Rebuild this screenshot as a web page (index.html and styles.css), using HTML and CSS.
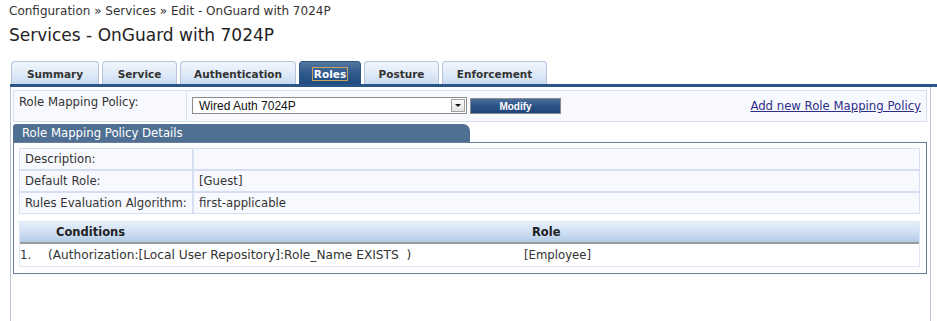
FILE: index.html
```html
<!DOCTYPE html>
<html lang="en">
<head>
    <meta charset="UTF-8">
    <title>Services - OnGuard with 7024P</title>
    <link rel="stylesheet" href="styles.css">
</head>
<body>
    <div class="breadcrumb">Configuration &raquo; Services &raquo; Edit - OnGuard with 7024P</div>
    <h1>Services - OnGuard with 7024P</h1>

    <div class="tabs">
        <a class="tab tab-summary">Summary</a>
        <a class="tab tab-service">Service</a>
        <a class="tab tab-auth">Authentication</a>
        <a class="tab tab-roles active"><span class="focus">Roles</span></a>
        <a class="tab tab-posture">Posture</a>
        <a class="tab tab-enforce">Enforcement</a>
    </div>

    <main class="panel">
        <div class="policy-row">
            <div class="label">Role Mapping Policy:</div>
            <div class="value">
                <div class="select">
                    <span>Wired Auth 7024P</span>
                    <span class="arrow"></span>
                </div>
                <button class="btn">Modify</button>
                <a class="add-link" href="#">Add new Role Mapping Policy</a>
            </div>
        </div>

        <div class="details-head">Role Mapping Policy Details</div>
        <div class="details">
            <table class="info">
                <tr><td class="label">Description:</td><td></td></tr>
                <tr><td class="label">Default Role:</td><td>[Guest]</td></tr>
                <tr><td class="label">Rules Evaluation Algorithm:</td><td>first-applicable</td></tr>
            </table>

            <table class="rules">
                <thead>
                    <tr>
                        <th class="num"></th>
                        <th class="cond">Conditions</th>
                        <th class="role">Role</th>
                    </tr>
                </thead>
                <tbody>
                    <tr>
                        <td class="num">1.</td>
                        <td class="cond">(Authorization:[Local User Repository]:Role_Name EXISTS &nbsp;)</td>
                        <td class="role">[Employee]</td>
                    </tr>
                </tbody>
            </table>
        </div>
    </main>
</body>
</html>
```

FILE: styles.css
```css
/* Policy Manager service page */
body {
    margin: 0;
    font-family: "DejaVu Sans", Verdana, sans-serif;
    font-size: 11.7px;
    color: #333;
    background: #fff;
}

.breadcrumb {
    padding: 4px 0 0 9px;
    font-size: 12px;
    line-height: 14px;
}

h1 {
    margin: 6px 0 0 9px;
    font-size: 17px;
    font-weight: normal;
    line-height: 22px;
    color: #222;
}

/* Tabs */
.tabs {
    display: flex;
    align-items: flex-end;
    gap: 3px;
    margin: 15px 0 0 10px;
    padding-left: 1px;
    border-bottom: 3px solid #2a5587;
}

.tab {
    box-sizing: border-box;
    height: 23px;
    line-height: 24px;
    text-align: center;
    border: 1px solid #b5c4dc;
    border-bottom: none;
    border-radius: 4px 4px 0 0;
    background: linear-gradient(#f1f6fd, #dde9f7 60%, #c8dbf0);
    font-size: 10.5px;
    font-weight: bold;
    color: #333;
    cursor: pointer;
}

.tab-summary { width: 88px; }
.tab-service { width: 75px; }
.tab-auth { width: 116px; }
.tab-roles { width: 62px; }
.tab-posture { width: 75px; }
.tab-enforce { width: 105px; }

.tab.active {
    background: linear-gradient(#55789f, #2f5a8c 50%, #1f4b80);
    border-color: #2a5587;
    color: #fff;
}

.tab .focus {
    border: 1px solid #c9a25e;
    padding: 0 1px;
}

/* Main panel */
.panel {
    margin: 0 6px 0 10px;
    min-height: 235px;
    padding: 3px 3px 0 2px;
    border-left: 1px solid #b7c3dd;
    border-right: 1px solid #b7c3dd;
}

/* Policy selector row */
.policy-row {
    display: flex;
    height: 32px;
}

.policy-row .label,
.policy-row .value {
    border: 1px solid #d5def2;
    background: #f8f9fe;
}

.policy-row .label {
    width: 167px;
    padding: 4px 0 0 5px;
    border-right: none;
}

.policy-row .value {
    flex: 1;
    display: flex;
    align-items: flex-start;
    padding: 6px 5px 0 5px;
}

.select {
    display: flex;
    align-items: center;
    justify-content: space-between;
    width: 267px;
    height: 15px;
    border: 1px solid #8c8c8c;
    background: #fff;
    font-family: "Liberation Sans", Arial, sans-serif;
    font-size: 12px;
    color: #111;
    padding-left: 6px;
    box-sizing: content-box;
}

.select .arrow {
    width: 14px;
    height: 13px;
    margin-right: 1px;
    border: 1px solid #a0a0a0;
    background: linear-gradient(#fbfbfb, #e2e2e2);
    box-sizing: border-box;
    position: relative;
}

.select .arrow::after {
    content: "";
    position: absolute;
    left: 3px;
    top: 4px;
    border-left: 3px solid transparent;
    border-right: 3px solid transparent;
    border-top: 3px solid #111;
}

.btn {
    margin: 1px 0 0 3px;
    width: 91px;
    height: 16px;
    padding: 0;
    border: 1px solid #8a8a8a;
    background: linear-gradient(#4a6f9c, #2a5286 50%, #1e467c);
    color: #fff;
    font-family: "Liberation Sans", Arial, sans-serif;
    font-size: 10px;
    font-weight: bold;
    cursor: pointer;
}

.add-link {
    margin-left: auto;
    color: #2e2e8a;
    padding-top: 2px;
}

/* Details panel */
.details-head {
    width: 448px;
    height: 18px;
    line-height: 18px;
    margin-top: 2px;
    padding-left: 9px;
    background: #4f6f93;
    color: #fff;
    border-radius: 3px 7px 0 0;
}

.details {
    border: 1px solid #667d9c;
    padding: 5px 6px 6px 5px;
}

table {
    border-collapse: separate;
    border-spacing: 0;
    width: 100%;
}

.info td {
    height: 20px;
    border: 1px solid #d5def2;
    background: #f8f9fe;
    padding: 0 5px;
}

.info .label {
    width: 162px;
}

.rules {
    margin-top: 7px;
    border: 1px solid #dde6f5;
    table-layout: fixed;
}

.rules th {
    height: 20px;
    text-align: left;
    font-weight: bold;
    font-size: 11.5px;
    color: #222;
    border-bottom: 2px solid #9c9c9c;
    background: linear-gradient(#e8f0fb, #cfdff2 50%, #b3cce8);
    padding: 0;
}

.rules td {
    background: #fff;
    height: 22px;
    padding: 0;
}

.rules .num {
    width: 28px;
}

.rules th.cond {
    width: 468px;
    padding-left: 8px;
}

.rules td.cond {
    font-size: 12.2px;
}

.rules th.role {
    padding-left: 8px;
}
```
